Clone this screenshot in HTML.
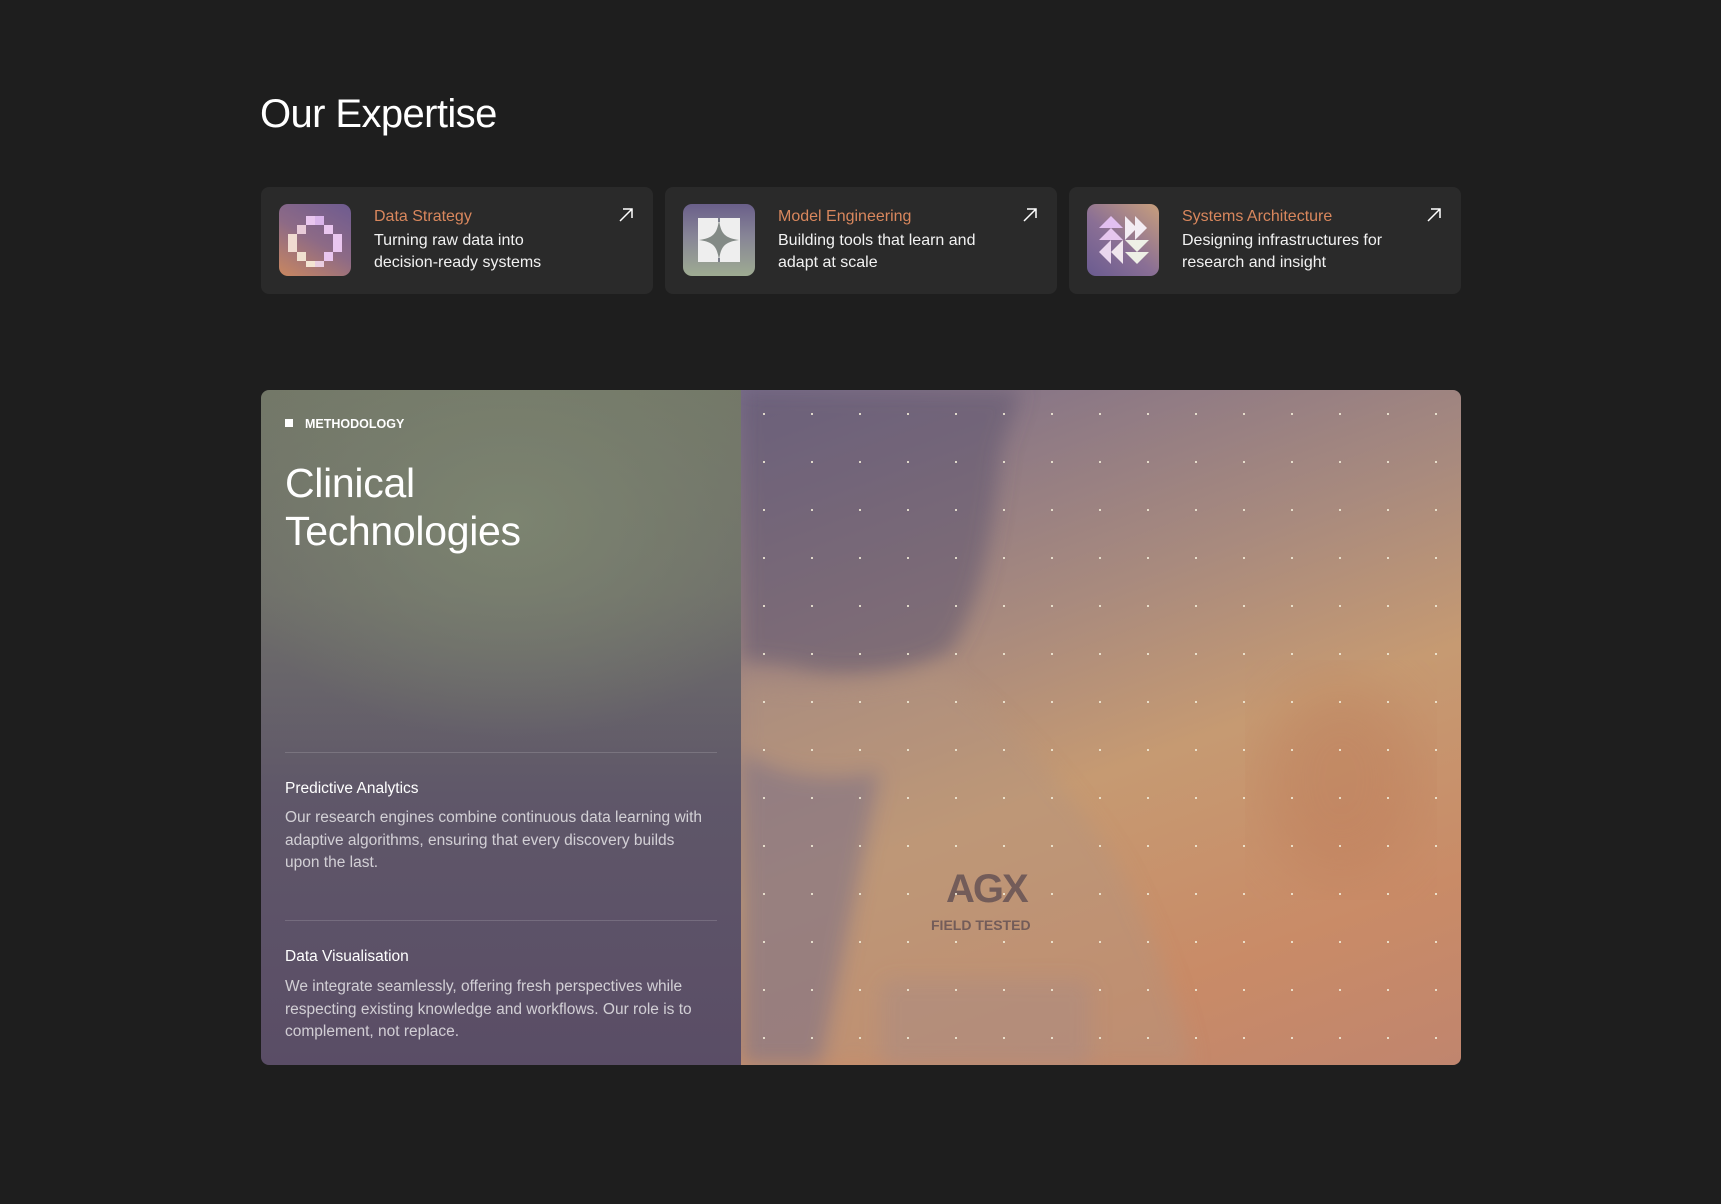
<!DOCTYPE html>
<html><head><meta charset="utf-8"><style>
*{margin:0;padding:0;box-sizing:border-box}
body{width:1721px;height:1204px;background:#1e1e1e;font-family:"Liberation Sans",sans-serif;color:#fff;position:relative;overflow:hidden}
h1{position:absolute;left:260px;top:92px;font-size:40px;font-weight:400;letter-spacing:-0.6px}
.card{position:absolute;top:187px;width:392px;height:107px;background:#2a2a2a;border-radius:8px}
.icon{position:absolute;left:18px;top:17px;width:72px;height:72px;border-radius:9px;overflow:hidden}
.ct{position:absolute;left:113px;top:21px;font-size:16px;color:#d9875d}
.cd{position:absolute;left:113px;top:43px;font-size:16px;line-height:22px;color:#f2f2f2}
.arr{position:absolute;right:20px;top:21px}
.panel{position:absolute;left:261px;top:390px;width:1200px;height:675px;border-radius:8px;overflow:hidden}
.left{position:absolute;left:0;top:0;width:480px;height:675px;background:radial-gradient(ellipse 300px 220px at 250px 130px,#7c8470,transparent),linear-gradient(180deg,#737868 0%,#6f6f6a 30%,#5f5769 60%,#5a4d66 100%)}
.right{position:absolute;left:480px;top:0;width:720px;height:675px;background:linear-gradient(160deg,#7a6d8a 0%,#a88a7e 35%,#c69a72 55%,#c98b67 80%,#c0856e 100%)}
.lbl{position:absolute;left:24px;top:27px;font-size:12.5px;font-weight:700;letter-spacing:0}
.lbl:before{content:"";display:inline-block;width:8px;height:8px;background:#fff;margin-right:12px;vertical-align:1px}
.h2{position:absolute;left:24px;top:69px;font-size:41px;line-height:48px;font-weight:400;letter-spacing:-0.3px}
.hr{position:absolute;left:24px;width:432px;height:1px;background:rgba(255,255,255,0.15)}
.st{position:absolute;left:24px;font-size:15.5px;color:#fff}
.sd{position:absolute;left:24px;width:432px;font-size:15.5px;line-height:22.5px;color:rgba(255,255,255,0.72)}
</style></head><body>
<h1>Our Expertise</h1>

<div class="card" style="left:261px">
<div class="icon" style="background:linear-gradient(30deg,#c98760 0%,#8d6a86 50%,#6e5b90 100%)">
<svg width="72" height="72" viewBox="0 0 72 72"><g fill="#e9c6ef">
<rect x="27" y="12" width="9" height="9"/><rect x="36" y="12" width="9" height="9" fill="#d9b4ea"/>
<rect x="18" y="21" width="9" height="9" fill="#e8cbd8"/><rect x="45" y="21" width="9" height="9"/>
<rect x="9" y="30" width="9" height="9" fill="#f0dbd0"/><rect x="54" y="30" width="9" height="9"/>
<rect x="9" y="39" width="9" height="9" fill="#f0dbd0"/><rect x="54" y="39" width="9" height="9"/>
<rect x="18" y="48" width="9" height="9" fill="#f0e0cf"/><rect x="45" y="48" width="9" height="9"/>
<rect x="27" y="57" width="9" height="6" fill="#f3e4d2"/><rect x="36" y="57" width="9" height="6" fill="#e9cde0"/></g></svg></div>
<div class="ct">Data Strategy</div>
<div class="cd">Turning raw data into<br>decision-ready systems</div>
<svg class="arr" width="14" height="14" viewBox="0 0 14 14"><path d="M1 13L13 1M4 1h9v9" stroke="#fff" stroke-width="1.5" fill="none"/></svg>
</div>

<div class="card" style="left:665px">
<div class="icon" style="background:linear-gradient(180deg,#6a5f8a 0%,#878596 45%,#9eab92 100%)">
<svg width="72" height="72" viewBox="0 0 72 72"><path d="M15 14h42v44H15z" fill="#eeeeee"/><path d="M36 16C38 30 42 34 56 36 42 38 38 42 36 56 34 42 30 38 16 36 30 34 34 30 36 16z" fill="#838a86"/><path d="M35 14h2v4h-2zM35 54h2v4h-2z" fill="#7c7f8c"/></svg></div>
<div class="ct">Model Engineering</div>
<div class="cd">Building tools that learn and<br>adapt at scale</div>
<svg class="arr" width="14" height="14" viewBox="0 0 14 14"><path d="M1 13L13 1M4 1h9v9" stroke="#fff" stroke-width="1.5" fill="none"/></svg>
</div>

<div class="card" style="left:1069px">
<div class="icon" style="background:linear-gradient(40deg,#6a5b90 0%,#8a6f95 45%,#c89f7c 100%)">
<svg width="72" height="72" viewBox="0 0 72 72"><g>
<path d="M12 24l12-12 12 12z" fill="#e2bff0"/>
<path d="M38 12l12 12-12 12z" fill="#f3ecf3"/><path d="M48 12l12 12-12 12z" fill="#f3ecf3"/>
<path d="M12 36l12-12 12 12z" fill="#e6c6ee"/>
<path d="M24 36L12 48l12 12z" fill="#ead6ee"/><path d="M36 36L24 48l12 12z" fill="#f0e6ee"/>
<path d="M38 36h24l-12 12z" fill="#eef0e6"/><path d="M38 48h24l-12 12z" fill="#eef0e6"/></g></svg></div>
<div class="ct">Systems Architecture</div>
<div class="cd">Designing infrastructures for<br>research and insight</div>
<svg class="arr" width="14" height="14" viewBox="0 0 14 14"><path d="M1 13L13 1M4 1h9v9" stroke="#fff" stroke-width="1.5" fill="none"/></svg>
</div>

<div class="panel">
<div class="right">
<svg width="720" height="675" style="position:absolute;left:0;top:0">
<defs>
<filter id="b"><feGaussianBlur stdDeviation="10"/></filter>
<filter id="b2"><feGaussianBlur stdDeviation="30"/></filter>
<pattern id="dots" x="22" y="23" width="48" height="48" patternUnits="userSpaceOnUse"><rect width="2" height="2" fill="#f2ecd8" opacity="0.85"/></pattern>
</defs>
<ellipse cx="600" cy="390" rx="80" ry="100" fill="#b8704f" opacity="0.3" filter="url(#b2)"/>
<g filter="url(#b)">
<path d="M0 0h280l-20 60c-10 90 -20 150 -50 200 -40 25 -120 30 -160 15L0 270z" fill="#5e5570" opacity="0.55"/>
<path d="M0 290c60 10 120 10 200-10 40 30 120 100 180 200 40 80 60 140 70 195H0z" fill="#b4957e" opacity="0.45"/>
<path d="M0 360c40 30 100 30 140 20l-60 295H0z" fill="#7a6d86" opacity="0.55"/>
<rect x="140" y="590" width="210" height="90" rx="10" fill="#a48a87" opacity="0.4"/>
</g>
<text x="205" y="512" font-family="Liberation Sans" font-weight="700" font-size="40" fill="#5a4a50" opacity="0.75" letter-spacing="-2">AGX</text>
<text x="190" y="540" font-family="Liberation Sans" font-weight="700" font-size="14" fill="#5a4a50" opacity="0.75">FIELD TESTED</text>
<rect width="720" height="675" fill="url(#dots)"/>
</svg>
</div>
<div class="left">
<div class="lbl">METHODOLOGY</div>
<div class="h2">Clinical<br>Technologies</div>
<div class="hr" style="top:362px"></div>
<div class="st" style="top:390px">Predictive Analytics</div>
<div class="sd" style="top:417px">Our research engines combine continuous data learning with adaptive algorithms, ensuring that every discovery builds<br>upon the last.</div>
<div class="hr" style="top:530px"></div>
<div class="st" style="top:558px">Data Visualisation</div>
<div class="sd" style="top:586px">We integrate seamlessly, offering fresh perspectives while respecting existing knowledge and workflows. Our role is to complement, not replace.</div>
</div>
</div>
</body></html>
